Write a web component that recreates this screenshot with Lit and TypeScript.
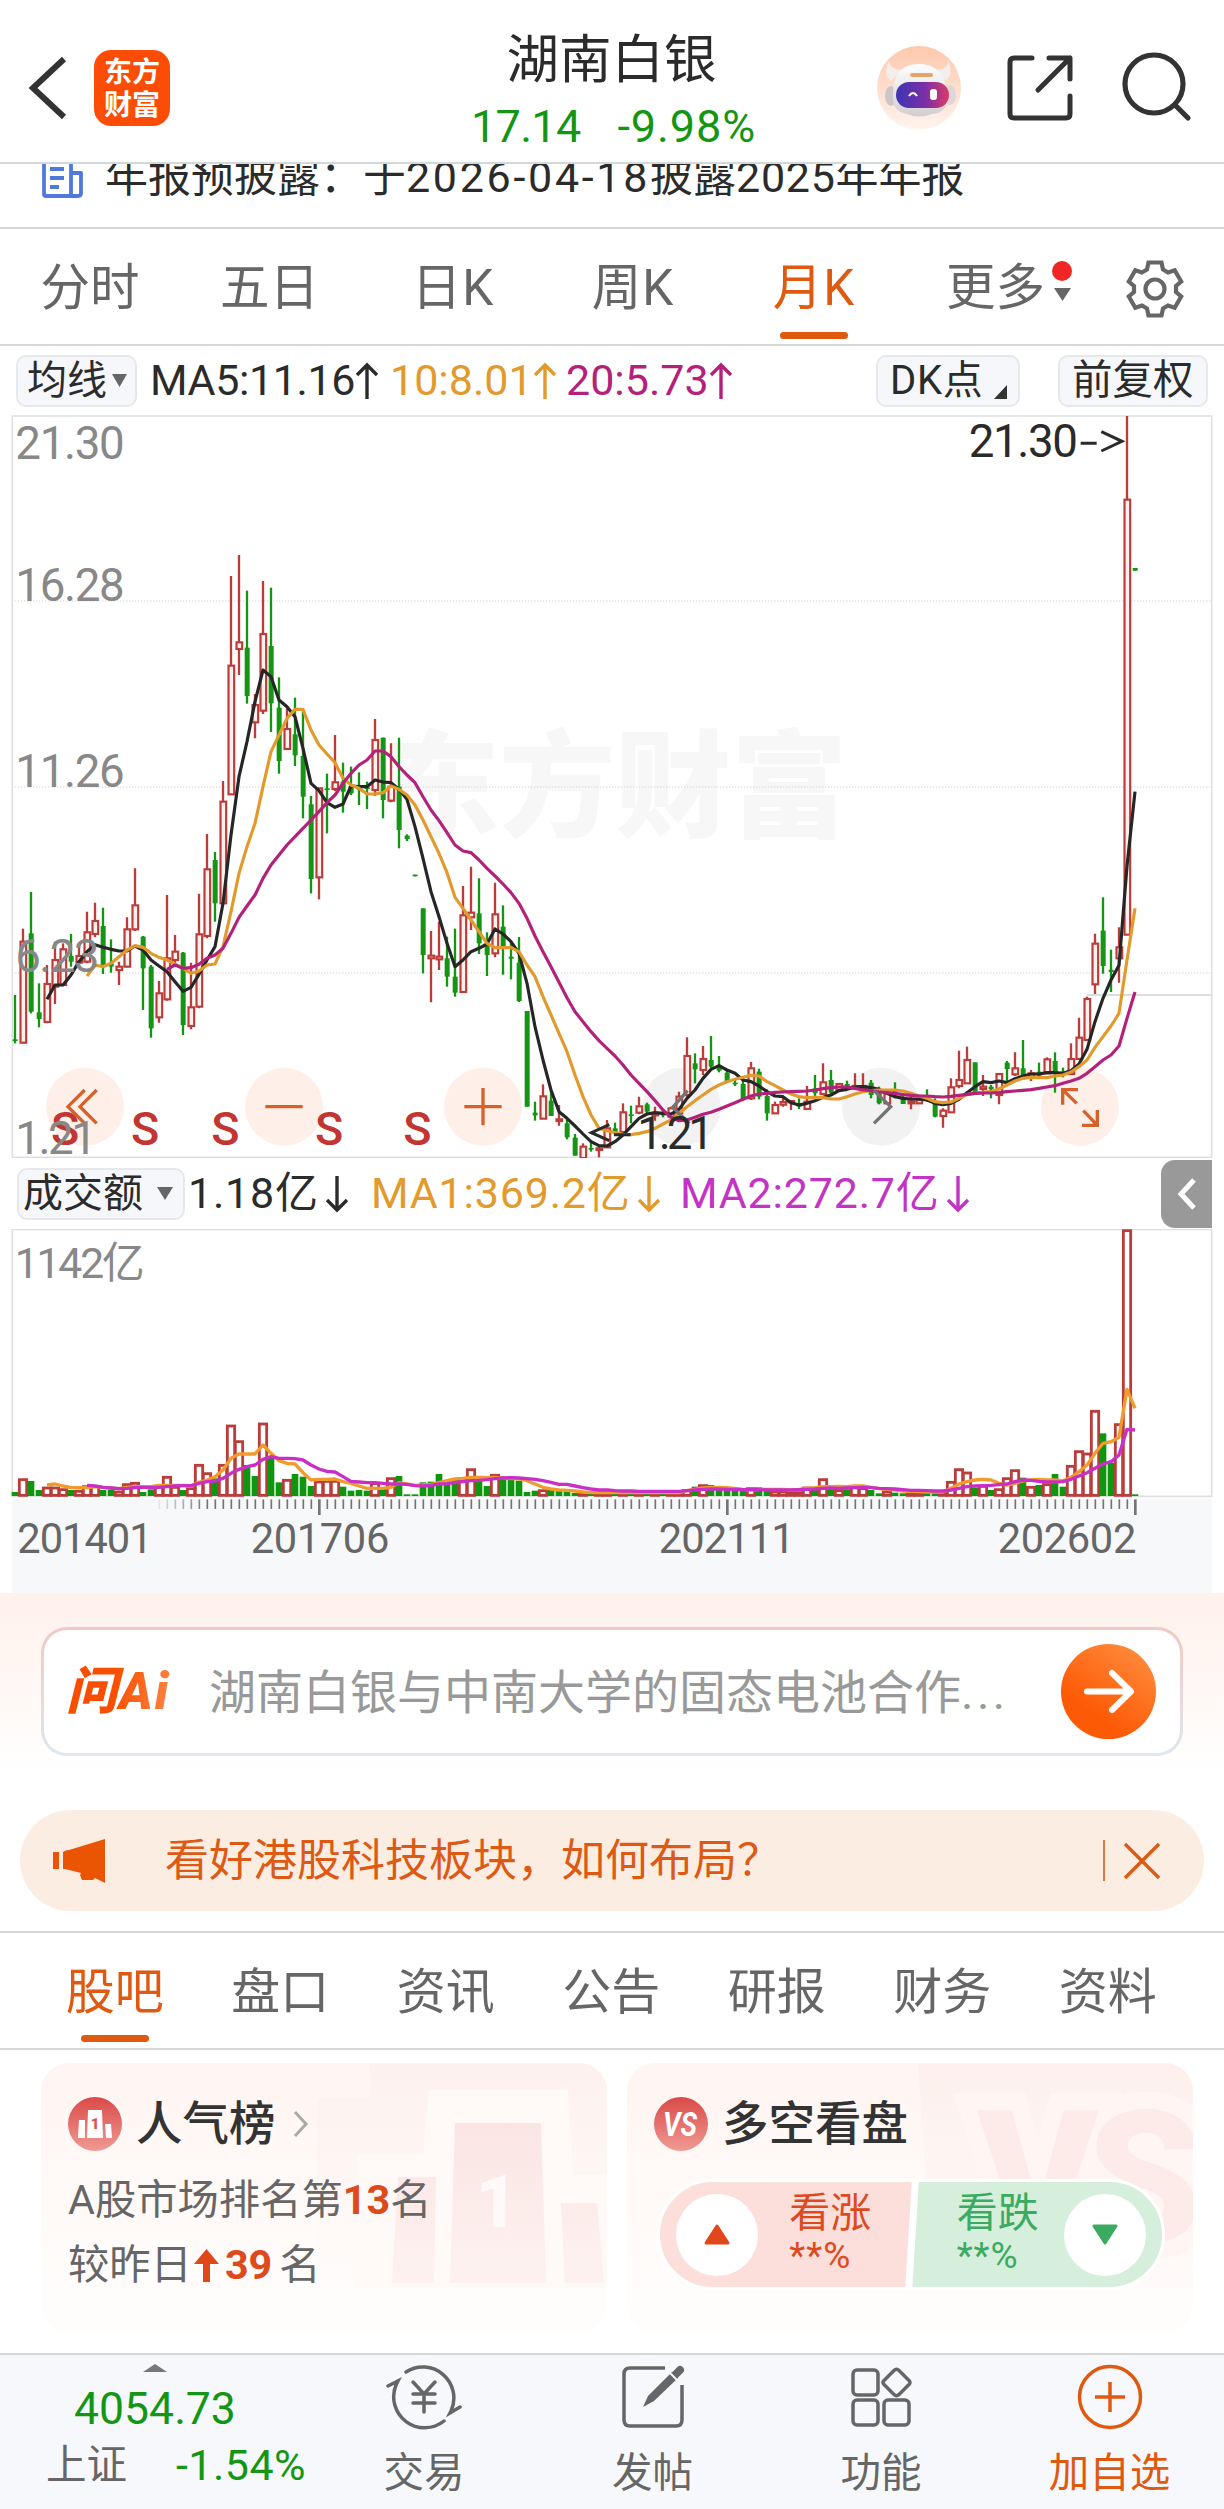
import { LitElement, html, svg, css } from "lit";
import { customElement } from "lit/decorators.js";

type Candle = [number, number, number, number, "r" | "g"];

// Monthly candles in chart units (3 units per pixel): high, body top, body bottom, low, direction.
const CANDLES: Candle[] = [
  [645, 778, 783, 790, "g"], [446, 485, 788, 788, "r"], [336, 460, 695, 700, "g"], [610, 697, 717, 742, "g"],
  [555, 612, 726, 730, "r"], [485, 540, 620, 672, "r"], [490, 508, 615, 615, "r"], [462, 528, 545, 560, "g"],
  [500, 528, 548, 550, "r"], [395, 457, 545, 550, "r"], [368, 423, 462, 472, "r"], [383, 438, 555, 582, "g"],
  [478, 550, 560, 578, "g"], [545, 560, 570, 615, "r"], [412, 448, 560, 562, "r"], [265, 376, 448, 453, "r"],
  [468, 470, 565, 690, "g"], [555, 560, 745, 773, "g"], [603, 640, 712, 728, "r"], [345, 535, 658, 662, "r"],
  [465, 515, 540, 555, "r"], [516, 518, 735, 765, "g"], [548, 682, 738, 748, "r"], [341, 463, 680, 685, "r"],
  [162, 268, 468, 475, "r"], [216, 240, 370, 425, "g"], [3, 65, 370, 370, "r"], [-612, -343, 43, 45, "r"],
  [-675, -413, -393, -315, "r"], [-568, -397, -252, -229, "g"], [-258, -225, -173, -125, "r"], [-597, -438, -208, -198, "r"],
  [-577, -402, -230, -144, "g"], [-308, -217, -57, -19, "g"], [-215, -153, -93, -93, "r"], [-247, -137, -74, -42, "g"],
  [-210, -72, 50, 115, "g"], [48, 73, 297, 340, "g"], [25, 25, 292, 358, "r"], [-19, 25, 28, 160, "g"],
  [-135, 7, 27, 33, "r"], [-52, 5, 35, 98, "g"], [-40, 18, 40, 45, "g"], [-23, 24, 28, 75, "g"],
  [5, 22, 26, 87, "g"], [-183, -120, 30, 48, "r"], [-127, -127, 60, 115, "g"], [-110, 20, 62, 67, "r"],
  [-127, 20, 150, 205, "g"], [163, 167, 177, 183, "g"], [284, 284, 289, 289, "g"], [385, 385, 525, 580, "g"],
  [453, 527, 535, 667, "r"], [425, 530, 538, 570, "r"], [470, 535, 590, 620, "g"], [446, 590, 638, 650, "g"],
  [318, 406, 636, 636, "r"], [260, 398, 412, 450, "r"], [295, 400, 490, 522, "g"], [457, 490, 525, 588, "g"],
  [308, 403, 520, 532, "r"], [376, 440, 500, 584, "g"], [485, 530, 536, 598, "g"], [471, 548, 663, 666, "g"],
  [693, 693, 980, 980, "g"], [965, 998, 1006, 1022, "g"], [913, 949, 1016, 1016, "r"], [932, 962, 1008, 1008, "g"],
  [975, 1018, 1023, 1037, "r"], [1018, 1030, 1072, 1078, "g"], [1062, 1073, 1127, 1127, "g"], [1090, 1100, 1134, 1134, "r"],
  [1080, 1104, 1108, 1115, "g"], [1095, 1105, 1110, 1132, "r"], [1020, 1045, 1102, 1102, "r"], [1028, 1045, 1060, 1068, "g"],
  [970, 997, 1056, 1056, "r"], [977, 1003, 1007, 1030, "g"], [950, 979, 998, 1003, "r"], [968, 973, 995, 1000, "g"],
  [980, 1000, 1006, 1022, "r"], [990, 1000, 1006, 1012, "g"], [980, 985, 1010, 1015, "r"], [935, 950, 1000, 1005, "r"],
  [772, 828, 945, 950, "r"], [820, 850, 868, 910, "g"], [798, 837, 870, 885, "r"], [768, 840, 860, 865, "g"],
  [828, 855, 872, 877, "g"], [870, 878, 905, 908, "g"], [895, 908, 912, 918, "g"], [900, 912, 957, 962, "g"],
  [846, 865, 955, 960, "r"], [866, 875, 950, 958, "g"], [928, 948, 1000, 1022, "g"], [965, 975, 1000, 1000, "r"],
  [955, 966, 974, 980, "r"], [960, 963, 967, 990, "r"], [955, 970, 980, 987, "g"], [918, 965, 987, 987, "r"],
  [885, 925, 940, 950, "g"], [850, 907, 942, 945, "r"], [870, 900, 938, 945, "g"], [910, 912, 930, 935, "r"],
  [902, 912, 928, 930, "g"], [880, 918, 925, 930, "r"], [880, 918, 925, 928, "r"], [900, 908, 945, 955, "g"],
  [920, 940, 970, 973, "g"], [935, 940, 970, 970, "r"], [907, 930, 938, 955, "g"], [940, 955, 972, 972, "g"],
  [950, 964, 970, 988, "r"], [955, 960, 970, 970, "r"], [928, 952, 958, 965, "g"], [955, 970, 1010, 1012, "g"],
  [985, 992, 1008, 1043, "r"], [895, 922, 997, 997, "r"], [812, 900, 918, 925, "r"], [800, 840, 910, 910, "r"],
  [847, 847, 937, 937, "g"], [885, 920, 927, 948, "r"], [915, 920, 928, 955, "g"], [880, 882, 945, 973, "r"],
  [843, 848, 867, 905, "g"], [817, 865, 883, 888, "r"], [780, 865, 885, 890, "g"], [870, 880, 890, 903, "r"],
  [848, 875, 887, 890, "g"], [832, 838, 880, 880, "r"], [817, 843, 882, 938, "g"], [863, 875, 885, 892, "g"],
  [790, 837, 882, 882, "r"], [713, 773, 837, 840, "r"], [650, 657, 780, 780, "r"], [461, 491, 613, 642, "r"],
  [352, 452, 558, 581, "g"], [509, 569, 576, 636, "g"], [442, 502, 535, 608, "r"], [-1092, -841, 464, 464, "r"],
  [-636, -636, -628, -628, "g"],
];

// Moving averages of the price, one value per candle from the given first candle.
const MA5 = [658, 615, 615, 585, 545, 515, 494, 502, 508, 513, 513, 498, 510, 540, 558, 575, 605, 634, 622, 583, 540, 500,
  370, 165, -10, -115, -235, -330, -310, -240, -220, -190, -95, 10, 32, 68, 82, 72, 18, 20, 20, 0, 6, 8, 28, 58, 140, 235,
  335, 410, 490, 560, 540, 515, 505, 492, 447, 462, 485, 520, 610, 740, 840, 930, 995, 1015, 1038, 1062, 1085, 1097, 1098,
  1085, 1065, 1040, 1015, 1002, 998, 1000, 1002, 988, 955, 930, 895, 868, 857, 870, 880, 900, 905, 918, 935, 948, 950, 968,
  975, 970, 962, 952, 945, 932, 928, 921, 920, 923, 928, 940, 950, 955, 957, 957, 960, 970, 974, 970, 958, 938, 920, 905,
  908, 903, 908, 896, 888, 882, 882, 878, 878, 880, 872, 852, 808, 725, 655, 600, 556, 258, 35];
const MA10 = [588, 555, 560, 550, 530, 510, 497, 502, 520, 532, 540, 552, 565, 580, 573, 555, 552, 500, 395, 280, 200, 130,
  20, -85, -135, -185, -212, -212, -150, -105, -78, -52, -5, 15, 25, 42, 42, 38, 18, 28, 45, 75, 120, 170, 220, 278, 352,
  385, 420, 455, 490, 503, 503, 503, 515, 555, 590, 650, 705, 760, 815, 885, 950, 1005, 1045, 1052, 1058, 1063, 1064, 1060,
  1055, 1045, 1032, 1020, 1000, 980, 962, 945, 928, 915, 905, 898, 892, 886, 888, 905, 917, 930, 942, 950, 953, 952, 953,
  957, 957, 950, 942, 935, 932, 930, 930, 930, 933, 940, 948, 955, 965, 968, 966, 955, 944, 940, 937, 935, 927, 915, 903,
  895, 892, 893, 893, 888, 885, 876, 860, 840, 802, 770, 738, 700, 540, 385];
const MA20 = [568, 555, 565, 563, 553, 535, 525, 505, 460, 412, 378, 345, 295, 255, 225, 195, 170, 145, 120, 95, 68, 45, 10,
  -20, -45, -60, -87, -87, -70, -40, -15, 8, 50, 90, 122, 158, 195, 213, 218, 240, 265, 288, 312, 338, 370, 415, 468, 515,
  560, 607, 653, 695, 725, 755, 782, 805, 828, 855, 885, 910, 935, 962, 990, 1012, 1022, 1020, 1012, 1003, 997, 988, 978,
  968, 958, 948, 942, 940, 937, 936, 935, 934, 933, 930, 926, 923, 921, 921, 925, 930, 932, 936, 938, 940, 944, 946, 948,
  948, 950, 951, 949, 946, 943, 940, 939, 939, 938, 935, 933, 931, 929, 925, 921, 917, 910, 903, 895, 880, 860, 840, 825,
  798, 715, 636];

// Turnover bars: direction and bar top, baseline at 1038.
const TURNOVER = ("g1026 r985 g993 g1020 r1010 r1010 r1015 g1020 r1020 r1006 r1006 g1020 g1020 r1022 r1000 r996 g1026 g1018 " +
  "r1005 r978 r1008 g1020 r1012 r942 r967 g985 r942 r824 r871 g945 g978 r818 g922 g997 r987 g972 g980 g1008 r992 r990 r990 " +
  "g1010 g1022 g1020 g1022 r997 g1012 r982 g978 g1033 g1033 g997 g995 g972 g1005 g990 r985 r955 g990 g1008 r972 g985 g990 " +
  "g992 g1026 g1022 r1018 g1015 g1022 g1025 g1029 r1026 g1030 r1026 r1024 g1028 r1024 g1028 r1026 g1028 r1028 g1030 r1028 " +
  "r1024 r1018 g1010 r1003 g1005 g1020 g1018 g1022 g1020 r1012 g1012 g1018 r1022 r1022 r1024 r1024 r1010 g1018 r985 g1015 " +
  "r1018 g1018 r1006 r1012 g1020 g1030 r1022 g1028 g1030 r1028 r1028 g1026 g1026 r1025 r993 r955 r965 g1013 r1005 g1020 " +
  "r1015 r982 r958 g983 r1008 g1005 r1000 g972 g1010 r945 r901 r908 r780 g850 g938 r820 r238 g1033")
  .split(" ").map((t) => ({ dir: t[0], top: Number(t.slice(1)) }));

const VMA1 = [1005, 1002, 1008, 1013, 1013, 1013, 1010, 1012, 1014, 1016, 1012, 1010, 1010, 1010, 1006, 1006, 1006, 1006,
  1008, 997, 990, 980, 960, 925, 912, 912, 912, 885, 910, 932, 940, 942, 968, 990, 988, 988, 987, 995, 1000, 1008, 1015,
  1015, 1015, 1012, 998, 1002, 1006, 1005, 1003, 998, 992, 987, 985, 982, 982, 983, 982, 984, 986, 986, 992, 1002, 1012,
  1017, 1020, 1021, 1023, 1026, 1028, 1028, 1028, 1028, 1028, 1028, 1028, 1028, 1028, 1028, 1028, 1028, 1022, 1018, 1014,
  1012, 1012, 1013, 1015, 1018, 1020, 1018, 1018, 1018, 1018, 1020, 1018, 1015, 1013, 1010, 1010, 1009, 1010, 1008, 1008,
  1012, 1016, 1018, 1020, 1023, 1024, 1025, 1026, 1026, 1026, 1015, 1002, 995, 990, 988, 990, 1000, 1005, 1000, 993, 990,
  988, 990, 990, 993, 982, 965, 945, 910, 880, 875, 862, 718, 775];
const VMA2 = [1006, 1008, 1012, 1014, 1016, 1015, 1013, 1012, 1012, 1012, 1010, 1008, 1007, 1007, 1000, 995, 993, 985, 970,
  958, 950, 945, 928, 920, 925, 925, 926, 930, 945, 957, 964, 966, 980, 994, 996, 998, 998, 1000, 1002, 1002, 1003, 1007,
  1008, 1006, 1002, 1001, 998, 995, 992, 991, 989, 986, 984, 983, 984, 986, 988, 992, 997, 1003, 1003, 1008, 1013, 1017,
  1020, 1020, 1022, 1023, 1023, 1024, 1024, 1024, 1024, 1024, 1024, 1022, 1020, 1018, 1017, 1017, 1018, 1018, 1019, 1019,
  1019, 1020, 1020, 1020, 1020, 1019, 1018, 1017, 1015, 1014, 1015, 1014, 1013, 1012, 1013, 1015, 1016, 1017, 1019, 1021,
  1021, 1022, 1023, 1023, 1020, 1015, 1010, 1008, 1007, 1006, 1004, 1002, 995, 990, 991, 994, 996, 996, 995, 988, 978, 968,
  955, 942, 935, 915, 838, 840];

const cx = (i: number) => 45 + 24 * i;
const line = (ys: number[], first: number) => ys.map((y, k) => `${cx(first + k)},${y}`).join(" ");

const RED = "#b93d3b";
const GREEN = "#149614";

@customElement("price-chart")
class PriceChart extends LitElement {
  static styles = css`
    :host { display: block; height: 743px; }
    svg { display: block; width: 1224px; height: 743px; }
    text { font-family: Roboto, "Noto Sans CJK SC", sans-serif; }
    .scale { fill: #888; font-size: 137px; }
    .mark { fill: #2a2a2a; font-size: 137px; }
    .sell { fill: #c23532; font-size: 140px; font-weight: 500; }
    .watermark { fill: #f7f7f7; font-size: 348px; font-weight: 900; font-family: "Noto Sans CJK SC", sans-serif; }
    .wave { fill: none; stroke-width: 9.5; stroke-linejoin: round; }
    .warm { fill: #fef0e9; }
    .cool { fill: #f2f2f2; }
    .glyph { fill: none; stroke: #d4622a; stroke-width: 10; }
    .dim { stroke: #747474; }
  `;
  private candle([high, top, bottom, low, dir]: Candle, i: number) {
    const x = cx(i);
    if (dir === "g") {
      return svg`<path d="M${x} ${high}V${low}" stroke=${GREEN} stroke-width="7"/>
        <rect x=${x - 7} y=${top} width="15" height=${Math.max(bottom - top, 5)} fill=${GREEN}/>`;
    }
    return svg`<path d="M${x} ${high}V${top}M${x} ${bottom}V${low}" stroke=${RED} stroke-width="7"/>
      <rect x=${x - 7.5} y=${top} width="17" height=${Math.max(bottom - top, 3)} fill="#fff0ee" stroke=${RED} stroke-width="6.5"/>`;
  }
  render() {
    return html`<svg viewBox="0 -1095 3672 2229">
      <text class="watermark" x="1150" y="145" textLength="1392">东方财富</text>
      ${[-537, 21, 579].map((y) => svg`<path d="M36 ${y}H3634" stroke="#d2d2d2" stroke-width="3" stroke-dasharray="4 5"/>`)}
      <path d="M37 1132V-1092H3635V1132Z" fill="none" stroke="#dfdfdf" stroke-width="5"/>
      <path d="M3260 645H3634" stroke="#cdd3d3" stroke-width="5"/>
      <circle class="warm" cx="255" cy="980" r="117"/>
      <circle class="warm" cx="852" cy="980" r="117"/>
      <circle class="warm" cx="1449" cy="980" r="117"/>
      <circle class="cool" cx="2045" cy="980" r="117"/>
      <circle class="cool" cx="2643" cy="980" r="117"/>
      <circle class="warm" cx="3240" cy="980" r="117"/>
      ${CANDLES.map((c, i) => this.candle(c, i))}
      <polyline class="wave" stroke="#262626" points=${line(MA5, 4)}/>
      <polyline class="wave" stroke="#e39a2d" points=${line(MA10, 9)}/>
      <polyline class="wave" stroke="#b3217a" points=${line(MA20, 19)}/>
      ${[195, 435, 676, 987, 1252].map((x) => svg`<text class="sell" x=${x} y="1094" text-anchor="middle">S</text>`)}
      <path class="glyph" d="M254 930L204 980L254 1030M290 930L240 980L290 1030"/>
      <path class="glyph" d="M796 980H908M1393 980H1505M1449 924V1036"/>
      <path class="glyph dim" d="M2063 932L2018 982L2068 1030M2622 932L2672 980L2622 1030"/>
      <path class="glyph" d="M3188 974V929H3234M3190 931L3230 970M3246 1036H3292V990M3290 1034L3250 992" stroke-width="12"/>
      <text class="scale" x="46" y="-963" textLength="328">21.30</text>
      <text class="scale" x="46" y="-536" textLength="328">16.28</text>
      <text class="scale" x="46" y="22" textLength="328">11.26</text>
      <text class="scale" x="46" y="577" textLength="252">6.23</text>
      <text class="scale" x="46" y="1122" textLength="245">1.21</text>
      <text class="mark" x="2906" y="-970" textLength="328">21.30</text>
      <path d="M3242 -1010H3290M3304 -1045L3366 -1016L3304 -987" fill="none" stroke="#2a2a2a" stroke-width="9"/>
      <text class="mark" x="1912" y="1106" textLength="230">1.21</text>
      <path d="M1842 1064H1892M1828 1034L1774 1058L1828 1082" fill="none" stroke="#2a2a2a" stroke-width="9"/>
    </svg>`;
  }
}

@customElement("turnover-chart")
class TurnoverChart extends LitElement {
  static styles = css`
    :host { display: block; height: 364px; }
    svg { display: block; width: 1224px; height: 364px; }
    text { font-family: Roboto, "Noto Sans CJK SC", sans-serif; }
    .scale { fill: #888; font-size: 128px; }
    .date { fill: #666; font-size: 125px; }
    .wave { fill: none; stroke-width: 10; stroke-linejoin: round; }
  `;
  render() {
    return html`<svg viewBox="0 237 3672 1092">
      <rect x="36" y="1047" width="3600" height="282" fill="#f7f8fa"/>
      <path d="M37 1039V238H3635V1039Z" fill="none" stroke="#dfdfdf" stroke-width="5"/>
      ${TURNOVER.map(({ dir, top }, i) => dir === "g"
        ? svg`<rect x=${cx(i) - 10} y=${top} width="20" height=${1038 - top} fill="#0e970e"/>`
        : svg`<rect x=${cx(i) - 11} y=${top + 4} width="22" height=${Math.max(1032 - top, 2)} fill="#fff" stroke=${RED} stroke-width="8.5"/>`)}
      <polyline class="wave" stroke="#f09b2b" points=${line(VMA1, 4)}/>
      <polyline class="wave" stroke="#c92fc6" points=${line(VMA2, 9)}/>
      ${Array.from({ length: 123 }, (_, k) => k + 18).map((i) => {
        const major = i === 38 || i === 89 || i === 140;
        return svg`<path d="M${cx(i) + 1} 1048V${major ? 1095 : 1077}" stroke="#757578"
          stroke-width=${major ? 8 : 5} opacity=${Math.min(1, (i - 17) / 7)}/>`;
      })}
      <text class="scale" x="44" y="384" textLength="390">1142亿</text>
      <text class="date" x="52" y="1208" textLength="406">201401</text>
      <text class="date" x="752" y="1208" textLength="416">201706</text>
      <text class="date" x="1976" y="1208" textLength="408">202111</text>
      <text class="date" x="2993" y="1208" textLength="416">202602</text>
    </svg>`;
  }
}

@customElement("app-root")
class AppRoot extends LitElement {
  static styles = css`
    :host { display: block; width: 1224px; height: 2509px; overflow: hidden; background: #fff; color: #2b2b2b;
      font-family: Roboto, "Noto Sans CJK SC", sans-serif; font-size: 43px; line-height: 1; white-space: nowrap; }
    * { box-sizing: border-box; }
    svg { display: block; flex: none; }
    .header { display: flex; height: 164px; border-bottom: 2px solid #d3d8da; }
    .side { width: 347px; flex: none; display: flex; align-items: flex-start; }
    .back { margin: 55px 26px 0 28px; }
    .brand { margin-top: 50px; width: 76px; height: 76px; border-radius: 17px; background: #fc4c06; color: #fff;
      font: 700 28px/33px "Noto Sans CJK SC", sans-serif; text-align: center; padding-top: 4px; }
    .brand span { display: block; }
    .title { flex: 1; display: flex; flex-direction: column; align-items: center; padding-top: 27px; }
    .name { font-size: 52.5px; line-height: 66px; margin-left: -1px; }
    .quote { display: flex; gap: 37px; color: #149614; font-size: 45px; line-height: 52px; margin-top: 8px; margin-left: 3px; }
    .price { letter-spacing: -0.7px; }
    .rate { letter-spacing: 0.9px; }
    .robot { margin: 44px 0 0 0; }
    .share { margin: 53px 0 0 44px; }
    .search { margin: 50px 0 0 45px; }

    .notice { height: 65px; overflow: hidden; border-bottom: 2px solid #d3d8da; display: flex; padding-left: 42px; }
    .notice svg { margin-top: -8px; }
    .notice p { margin: -19px 0 0 22px; line-height: 64px; font-size: 43px; }
    .date { letter-spacing: 2.7px; }
    .year { letter-spacing: 0.7px; }

    .tabs { height: 117px; display: grid; grid-template-columns: 180px 179px 188px 172px 190px 175px 140px;
      border-bottom: 2px solid #d3d8da; color: #666; font-size: 49.5px; line-height: 119px; text-align: center; }
    .tab { position: relative; }
    .k { letter-spacing: 1px; }
    .on { color: #df5a10; }
    .tab.on::after { content: ""; position: absolute; left: calc(50% - 34px); bottom: 9px; width: 68px; height: 7px;
      border-radius: 4px; background: #df5a10; }
    .more { display: flex; align-items: center; padding-left: 37px; gap: 6px; }
    .more svg { margin-top: -12px; }
    .gear { display: flex; align-items: center; padding-left: 42px; }

    .row { display: flex; align-items: center; }
    .averages { height: 69px; padding: 0 16px; }
    .chip { height: 52px; border: 2px solid #e6e8eb; border-radius: 10px; background: #f6f7fa; display: flex;
      align-items: center; font-size: 40px; padding-left: 9px; }
    .chip svg { margin-left: 5px; }
    .value { display: flex; align-items: center; }
    .turnover .value { letter-spacing: 0.8px; }
    .turnover .value svg { margin-left: 6px; }
    .orange { color: #e39a2d; }
    .magenta { color: #b3217a; }
    .violet { color: #c234c4; }

    .turnover { height: 71px; padding-left: 17px; align-items: center; }
    .drawer { margin-left: auto; margin-right: 12px; width: 51px; height: 68px; background: #999;
      border-radius: 14px 0 0 14px; display: grid; place-items: center; }

    .ai { height: 207px; padding: 34px 41px 0; background: linear-gradient(#fff1eb, #fff 88%); }
    .ask { height: 129px; border: 3px solid transparent; border-radius: 26px; padding: 0 24px 0 22px;
      background: linear-gradient(#fff, #fff) padding-box, linear-gradient(#f1c9c3, #dfe7f1) border-box;
      display: flex; align-items: center; }
    .logo { width: 118px; font-size: 51px; font-weight: 900; font-style: italic; letter-spacing: 2px;
      background: linear-gradient(100deg, #f94e00 40%, #ff9355); -webkit-background-clip: text; color: transparent; line-height: 60px; }
    .prompt { color: #999; font-size: 47px; margin-left: 25px; flex: 1; line-height: 60px; padding-top: 3px; }
    .dots { letter-spacing: 3.5px; }

    .banner { margin: 10px 20px 20px; height: 101px; border-radius: 51px; background: #fcede3; color: #dd5a14;
      display: flex; align-items: center; padding: 0 43px 0 33px; font-size: 44px; }
    .banner span { margin-left: 60px; flex: 1; line-height: 60px; }
    .rule { width: 2px; height: 41px; background: #d97b49; margin-right: 18px; }

    .sections { height: 119px; border: solid #d6d6d6; border-width: 2px 0; display: grid; color: #666;
      grid-template-columns: repeat(7, 165.5px); padding-left: 32px; font-size: 49px; line-height: 119px; text-align: center; }
    .sections .tab.on::after { bottom: 10px; }

    .cards { display: flex; gap: 20px; padding: 13px 0 20px 41px; }
    .card { position: relative; width: 566px; height: 270px; border-radius: 28px; overflow: hidden;
      background: linear-gradient(#fff5f2, #fffdfc 85%); }
    .art { position: absolute; inset: 0; }
    .body { position: relative; padding: 33px 0 0 27px; color: #666; font-size: 41.3px; }
    .head { display: flex; align-items: center; height: 56px; color: #333; font-size: 46.5px; font-weight: 500; }
    .head span { margin: 0 17px 0 14px; line-height: 56px; }
    .stat { line-height: 65px; display: flex; align-items: center; }
    .stat b { color: #dd4a1c; font-weight: 700; }
    .stat svg { margin: 0 6px 0 2px; }
    .stat .rank { margin-left: 7px; }
    .first { margin-top: 16px; }
    .pill { display: flex; align-items: center; width: 508px; height: 111px; margin: 27px 0 0 3px; border: 3px solid #fff;
      border-radius: 56px; padding: 0 16px; justify-content: space-between; font-size: 41px;
      background: linear-gradient(93.5deg, #fcdedb 49.4%, #fff 49.6%, #fff 50.8%, #d6eedc 51%); }
    .knob { width: 82px; height: 82px; border-radius: 50%; background: #fff; display: grid; place-items: center; }
    .vote { display: flex; flex-direction: column; line-height: 46px; margin-top: -4px; width: 84px; }
    .vote small { font-size: 37px; line-height: 40px; letter-spacing: 1px; }
    .up { color: #dc4b1f; margin-left: -52px; }
    .down { color: #3aab60; margin-right: -60px; }

    .nav { height: 156px; border-top: 2px solid #d6d6d6; background: #f7f8fb; display: grid; color: #666;
      grid-template-columns: 310px 228px 229px 228px 229px; font-size: 40.5px; }
    .index { display: flex; flex-direction: column; align-items: center; color: #149614; padding-top: 9px; }
    .index .points { font-size: 44.5px; line-height: 50px; margin-top: 12px; }
    .index .change { display: flex; gap: 49px; line-height: 50px; margin: 6px -42px 0 0; }
    .index .market { color: #666; }
    .index .pct { font-size: 43px; letter-spacing: 0.5px; }
    .item { display: flex; flex-direction: column; align-items: center; padding-top: 9px; }
    .item span { line-height: 56px; margin-top: 15px; }
  `;

  private caret(w: number, h: number, color = "#666") {
    return html`<svg width=${w} height=${h} viewBox="0 0 10 10" preserveAspectRatio="none"><path d="M0 0H10L5 10Z" fill=${color}/></svg>`;
  }
  private arrow(down = false) {
    return html`<svg width="24" height="38" viewBox="0 0 24 38"><g transform=${down ? "rotate(180 12 19)" : ""}>
      <path d="M12 37V3M2 13L12 3L22 13" fill="none" stroke="currentColor" stroke-width="3.4"/></g></svg>`;
  }

  render() {
    return html`
      <div class="header">
        <div class="side">
          <svg class="back" width="40" height="66" viewBox="0 0 40 66"><path d="M36 4L5 33L36 62" fill="none" stroke="#333" stroke-width="6"/></svg>
          <div class="brand"><span>东方</span><span>财富</span></div>
        </div>
        <div class="title">
          <div class="name">湖南白银</div>
          <div class="quote"><span class="price">17.14</span><span class="rate">-9.98%</span></div>
        </div>
        <div class="side">
          <svg class="robot" width="84" height="88" viewBox="0 0 84 88">
            <defs>
              <linearGradient id="halo" x2="0" y2="1"><stop offset="0" stop-color="#fdc8ab"/><stop offset="1" stop-color="#fff4ef"/></linearGradient>
              <linearGradient id="visor"><stop offset="0" stop-color="#3d35b4"/><stop offset=".55" stop-color="#7a2fa8"/><stop offset="1" stop-color="#dd3a66"/></linearGradient>
              <linearGradient id="shell" x2="0" y2="1"><stop offset="0" stop-color="#fff"/><stop offset="1" stop-color="#d3cdd0"/></linearGradient>
            </defs>
            <circle cx="42" cy="44" r="42" fill="url(#halo)"/>
            <path d="M12 17Q5 30 14 37L26 26Q13 26 12 17ZM71 17Q77 30 69 37L57 26Q71 26 71 17Z" fill="#f5edec"/>
            <ellipse cx="14" cy="52" rx="6" ry="10" fill="#ccc6ca"/><ellipse cx="73" cy="51" rx="6" ry="10" fill="#ded6d9"/>
            <path d="M16 50Q16 20 42 20Q68 20 70 50Q72 69 55 70Q42 75 30 70Q14 67 16 50Z" fill="url(#shell)"/>
            <rect x="33" y="29" width="23" height="4" rx="2" fill="#e5a66c"/>
            <rect x="19" y="38" width="53" height="26" rx="13" fill="url(#visor)"/>
            <path d="M32 52Q36 46 40 52" fill="none" stroke="#fff" stroke-width="2"/>
            <rect x="53" y="45" width="7" height="11" rx="3" fill="#fff"/>
          </svg>
          <svg class="share" width="70" height="70" viewBox="0 0 70 70" fill="none" stroke="#333" stroke-width="5" stroke-linecap="round" stroke-linejoin="round">
            <path d="M27 5H9Q5 5 5 9V61Q5 65 9 65H61Q65 65 65 61V43"/><path d="M44 5H65V26M65 5L33 37"/>
          </svg>
          <svg class="search" width="76" height="76" viewBox="0 0 76 76" fill="none" stroke="#333" stroke-width="5.200" stroke-linecap="round">
            <circle cx="34" cy="34" r="29"/><path d="M55 55L68 68"/>
          </svg>
        </div>
      </div>

      <div class="notice">
        <svg width="41" height="44" viewBox="0 0 41 44" fill="none" stroke="#4f79dc" stroke-width="3.8" stroke-linejoin="round">
          <path d="M2 0V38Q2 40 4 40H36Q39 40 39 37V17H29V40M29 17V0"/><path d="M8 13H22M8 22H22M8 31H17"/>
        </svg>
        <p>年报预披露：于<span class="date">2026-04-18</span>披露<span class="year">2025</span>年年报</p>
      </div>

      <div class="tabs">
        <div class="tab">分时</div><div class="tab">五日</div><div class="tab k">日K</div><div class="tab k">周K</div>
        <div class="tab k on">月K</div>
        <div class="more">更多<svg width="22" height="44" viewBox="0 0 22 44"><circle cx="11" cy="10" r="10" fill="#f02525"/><path d="M3 27H20L11.500 40Z" fill="#666"/></svg></div>
        <div class="gear"><svg width="58" height="58" viewBox="-29 -29 58 58" fill="none" stroke="#666" stroke-width="4.200">
          <circle r="9.500"/>
          <path d="M-6.500 -26.500H6.500L8 -19.500L13 -16.500L19.700 -18.800L26.200 -7.500L21 -3V3L26.200 7.500L19.700 18.800L13 16.500L8 19.500L6.500 26.500H-6.500L-8 19.500L-13 16.500L-19.700 18.800L-26.200 7.500L-21 3V-3L-26.200 -7.500L-19.700 -18.800L-13 -16.500L-8 -19.500Z"/>
        </svg></div>
      </div>

      <div class="row averages">
        <div class="chip" style="width:121px">均线${this.caret(15, 13)}</div>
        <div class="value" style="width:239px;padding-left:13px;letter-spacing:-0.4px">MA5:11.16${this.arrow()}</div>
        <div class="value orange" style="width:177px;padding-left:14px">10:8.01${this.arrow()}</div>
        <div class="value magenta" style="width:177px;padding-left:13px">20:5.73${this.arrow()}</div>
        <div class="chip" style="width:144px;margin-left:auto;padding-left:12px;letter-spacing:0.7px">DK点<svg width="13" height="14" style="margin:22px 0 0 11px"><path d="M13 0V14H0Z" fill="#333"/></svg></div>
        <div class="chip" style="width:150px;margin-left:38px;padding-left:12px;font-size:40.5px">前复权</div>
      </div>

      <price-chart></price-chart>

      <div class="row turnover">
        <div class="chip" style="width:168px;padding-left:4px">成交额<span style="width:9px"></span>${this.caret(16, 13)}</div>
        <div class="value" style="width:181px;padding-left:3px">1.18亿${this.arrow(true)}</div>
        <div class="value orange" style="width:310px;padding-left:5px">MA1:369.2亿${this.arrow(true)}</div>
        <div class="value violet" style="padding-left:4px">MA2:272.7亿${this.arrow(true)}</div>
        <div class="drawer"><svg width="20" height="32" viewBox="0 0 20 32"><path d="M17 2L4 16L17 30" fill="none" stroke="#fff" stroke-width="5"/></svg></div>
      </div>

      <turnover-chart></turnover-chart>

      <div class="ai">
        <div class="ask">
          <div class="logo">问Ai</div>
          <div class="prompt">湖南白银与中南大学的固态电池合作<span class="dots">...</span></div>
          <svg width="95" height="95" viewBox="0 0 95 95">
            <defs><linearGradient id="go" x1=".8" y1="0" x2=".3" y2=".7"><stop offset="0" stop-color="#ff8c3c"/><stop offset="1" stop-color="#fd5a06"/></linearGradient></defs>
            <circle cx="47.500" cy="47.500" r="47.500" fill="url(#go)"/>
            <path d="M26 47.500H69M51 29L70 47.500L51 66" fill="none" stroke="#fff" stroke-width="6" stroke-linecap="round" stroke-linejoin="round"/>
          </svg>
        </div>
      </div>

      <div class="banner">
        <svg width="52" height="46" viewBox="0 0 52 46" fill="#ea5504"><path d="M0 14H6V31H0ZM10 14Q12 12 16 12L52 1V45L42 40L40 42H29L27 37L28 35L12 31H10Z"/></svg>
        <span>看好港股科技板块，如何布局？</span>
        <div class="rule"></div>
        <svg width="38" height="38" viewBox="0 0 38 38"><path d="M2 2L36 36M36 2L2 36" stroke="#dd5a14" stroke-width="3.400"/></svg>
      </div>

      <div class="sections">
        <div class="tab on">股吧</div>${["盘口", "资讯", "公告", "研报", "财务", "资料"].map((t) => html`<div class="tab">${t}</div>`)}
      </div>

      <div class="cards">
        <div class="card">
          <svg class="art" width="566" height="270" viewBox="0 0 566 270">
            <defs>
              <linearGradient id="tint" gradientUnits="userSpaceOnUse" x1="0" y1="0" x2="0" y2="225"><stop offset="0" stop-color="#fdf1ee"/><stop offset="1" stop-color="#fffcfb"/></linearGradient>
              <linearGradient id="block" gradientUnits="userSpaceOnUse" x1="0" y1="60" x2="0" y2="220"><stop offset="0" stop-color="#fae5e3"/><stop offset="1" stop-color="#fdf2f0"/></linearGradient>
            </defs>
            <path d="M329 0H566V225H276V35H329Z" fill="url(#tint)"/>
            <path d="M388 27H527L532 112H566V225H312L316 92H382Z" fill="#fff9f7"/>
            <path d="M414 60H500L505 220H409ZM357 114H395L393 220H351ZM520 140H556L563 220H524Z" fill="url(#block)"/>
            <text x="456" y="164" text-anchor="middle" font-size="73" font-weight="900" fill="#fff9f7">1</text>
          </svg>
          <div class="body">
            <div class="head">
              <svg width="54" height="54" viewBox="0 0 54 54">
                <defs><linearGradient id="badge" x2="0" y2="1"><stop offset="0" stop-color="#d94a48"/><stop offset="1" stop-color="#f09a93"/></linearGradient></defs>
                <circle cx="27" cy="27" r="27" fill="url(#badge)"/>
                <path d="M11 23H17V41H10ZM20 13H34L35 41H19ZM37 27H43L44 41H38Z" fill="#fff"/>
                <text x="27" y="32" text-anchor="middle" font-size="15" font-weight="900" fill="#d95451">1</text>
              </svg>
              <span>人气榜</span>
              <svg width="16" height="26" viewBox="0 0 16 26"><path d="M2 1L13 13L2 25" fill="none" stroke="#aaa" stroke-width="3"/></svg>
            </div>
            <div class="stat first">A股市场排名第<b>13</b>名</div>
            <div class="stat">较昨日<svg width="25" height="34" viewBox="0 0 25 34"><path d="M12.500 0L25 15H16V33H9V15H0Z" fill="#e0481a"/></svg><b>39</b><span class="rank">名</span></div>
          </div>
        </div>
        <div class="card">
          <svg class="art" width="566" height="270" viewBox="0 0 566 270">
            <path d="M291 0H566V225H306Z" fill="url(#tint2)"/>
            <defs><linearGradient id="tint2" x2="0" y2="1"><stop offset="0" stop-color="#fdf0ed"/><stop offset="1" stop-color="#fffbfa"/></linearGradient></defs>
            <text x="350" y="178" font-size="184" font-weight="900" letter-spacing="-12" fill="#fcebe9" stroke="#fff6f3" stroke-width="34" paint-order="stroke">VS</text>
          </svg>
          <div class="body">
            <div class="head">
              <svg width="54" height="54" viewBox="0 0 54 54">
                <defs><linearGradient id="badge2" x2="0" y2="1"><stop offset="0" stop-color="#d94a48"/><stop offset="1" stop-color="#f09a93"/></linearGradient></defs>
                <circle cx="27" cy="27" r="27" fill="url(#badge2)"/>
                <text x="26" y="39" text-anchor="middle" font-size="34" font-weight="700" font-style="italic" textLength="34" lengthAdjust="spacingAndGlyphs" fill="#fff">VS</text>
              </svg>
              <span>多空看盘</span>
            </div>
            <div class="pill">
              <div class="knob"><svg width="26" height="21" viewBox="0 0 26 21"><path d="M13 2L24 19H2Z" fill="#e0481a" stroke="#e0481a" stroke-width="3" stroke-linejoin="round"/></svg></div>
              <div class="vote up">看涨<small>**%</small></div>
              <div class="vote down">看跌<small>**%</small></div>
              <div class="knob"><svg width="26" height="21" viewBox="0 0 26 21"><path d="M13 19L2 2H24Z" fill="#3aab60" stroke="#3aab60" stroke-width="3" stroke-linejoin="round"/></svg></div>
            </div>
          </div>
        </div>
      </div>

      <div class="nav">
        <div class="index">
          <svg width="24" height="8" viewBox="0 0 24 8"><path d="M12 0L24 8H0Z" fill="#77777c"/></svg>
          <div class="points">4054.73</div>
          <div class="change"><span class="market">上证</span><span class="pct">-1.54%</span></div>
        </div>
        <div class="item">
          <svg width="76" height="66" viewBox="-38 -33 76 66" fill="none" stroke="#666" stroke-width="3.500" stroke-linecap="round">
            <path d="M-18 -25A31 31 0 0 1 27 14L26 16L36 10"/><path d="M20 24A31 31 0 0 1 -28 -12L-26 -16L-36 -11"/>
            <path d="M-11 -15L0 -3L11 -15M0 -3V15M-11 -3H11M-11 6H11"/>
          </svg>
          <span>交易</span>
        </div>
        <div class="item">
          <svg width="66" height="66" viewBox="0 0 66 66" fill="none" stroke="#666" stroke-width="3.500">
            <path d="M45 4H10Q4 4 4 10V56Q4 62 10 62H56Q62 62 62 56V21"/>
            <path d="M23 43L28 32L52 8L58 14L34 37Z" fill="#666" stroke="none"/><path d="M55 11L60 6" stroke-width="8" stroke-linecap="round"/><path d="M50 9L58 17" stroke="#f7f8fb" stroke-width="2"/>
          </svg>
          <span>发帖</span>
        </div>
        <div class="item">
          <svg width="66" height="66" viewBox="0 0 66 66" fill="none" stroke="#666" stroke-width="3.500" stroke-linejoin="round">
            <rect x="5" y="6" width="25" height="25" rx="4"/><rect x="5" y="36" width="25" height="25" rx="4"/><rect x="36" y="36" width="25" height="25" rx="4"/>
            <path d="M46 6.500Q48.500 4 51 6.500L61 16.500Q63 18.500 61 20.500L51 30.500Q48.500 33 46 30.500L36 20.500Q34 18.500 36 16.500Z"/>
          </svg>
          <span>功能</span>
        </div>
        <div class="item on">
          <svg width="66" height="66" viewBox="-33 -33 66 66" fill="none" stroke="#df5a10" stroke-width="3.500">
            <circle r="30.500"/><path d="M-15 0H15M0 -15V15"/>
          </svg>
          <span>加自选</span>
        </div>
      </div>
    `;
  }
}
